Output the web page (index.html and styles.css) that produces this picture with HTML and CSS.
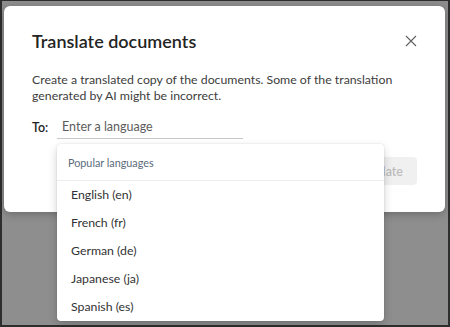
FILE: index.html
```html
<!DOCTYPE html>
<html lang="en">
<head>
  <meta charset="UTF-8">
  <title>Translate documents</title>
  <link rel="stylesheet" href="styles.css">
</head>
<body>
  <div class="frame">
    <div class="dialog">
      <div class="dialog-head">
        <h1 class="dialog-title">Translate documents</h1>
        <button class="close-btn" aria-label="Close">
          <svg width="12" height="12" viewBox="0 0 12 12">
            <path d="M1 1 L11 11 M11 1 L1 11" stroke="#616161" stroke-width="1.1" fill="none"/>
          </svg>
        </button>
      </div>
      <p class="dialog-text">Create a translated copy of the documents. Some of the translation generated by AI might be incorrect.</p>
      <div class="field-row">
        <label class="field-label">To:</label>
        <div class="picker">
          <input class="picker-input" type="text" placeholder="Enter a language">
          <div class="listbox">
            <div class="list-header">Popular languages</div>
            <div class="option">English (en)</div>
            <div class="option">French (fr)</div>
            <div class="option">German (de)</div>
            <div class="option">Japanese (ja)</div>
            <div class="option">Spanish (es)</div>
          </div>
        </div>
      </div>
      <div class="dialog-actions">
        <button class="btn-primary" disabled>Translate</button>
      </div>
    </div>
  </div>
</body>
</html>
```

FILE: styles.css
```css
* {
  box-sizing: border-box;
  margin: 0;
  padding: 0;
}

body {
  width: 450px;
  height: 327px;
  overflow: hidden;
  font-family: Lato, 'Noto Sans', sans-serif;
  color: #242424;
}

.frame {
  width: 450px;
  height: 327px;
  background: #8e8e8e;
  border: 2px solid #2e2e2e;
  border-top-width: 1px;
  padding: 5px 3px 0 2px;
}

.dialog {
  background: #fff;
  border-radius: 6px;
  height: 206px;
  padding: 21px 28px 0 28px;
  box-shadow: 0 2px 8px rgba(0,0,0,0.25);
}

.dialog-head {
  display: flex;
  justify-content: space-between;
  align-items: center;
  height: 28px;
}

.dialog-title {
  font-size: 18px;
  font-weight: 600;
  color: #242424;
}

.close-btn {
  border: 0;
  background: none;
  width: 20px;
  height: 20px;
  display: flex;
  align-items: center;
  justify-content: center;
  margin-right: -4px;
}

.dialog-text {
  margin-top: 17px;
  font-size: 12.3px;
  line-height: 16px;
  color: #3d3d3d;
}

.field-row {
  display: flex;
  align-items: center;
  margin-top: 11px;
}

.field-label {
  font-size: 12.5px;
  font-weight: 600;
  color: #242424;
  width: 25px;
}

.picker {
  position: relative;
}

.picker-input {
  width: 186px;
  height: 24px;
  border: 0;
  border-bottom: 1px solid #c7c7c7;
  outline: none;
  font-family: inherit;
  font-size: 12.5px;
  padding: 0 5px;
  color: #242424;
}

.picker-input::placeholder {
  color: #5c5c5c;
}

.listbox {
  position: absolute;
  top: 29px;
  left: 0;
  width: 327px;
  height: 177px;
  background: #fff;
  border-radius: 4px;
  box-shadow: 0 0 2px rgba(0,0,0,0.12), 0 4px 10px rgba(0,0,0,0.18);
  overflow: hidden;
  z-index: 2;
}

.list-header {
  font-size: 10.8px;
  color: #5a6b7b;
  padding: 12px 11px 0;
  height: 37px;
  border-bottom: 1px solid #ededed;
}

.option {
  font-size: 12.3px;
  color: #333;
  height: 28px;
  line-height: 28px;
  padding-left: 14px;
}

.option:first-of-type {
  margin-top: 6px;
}

.dialog-actions {
  display: flex;
  justify-content: flex-end;
  margin-top: 18px;
}

.btn-primary {
  background: #f0f0f0;
  border: 0;
  border-radius: 4px;
  height: 28px;
  padding: 0 14px;
  font-family: inherit;
  font-size: 12.5px;
  font-weight: 600;
  color: #bdbdbd;
}
```
